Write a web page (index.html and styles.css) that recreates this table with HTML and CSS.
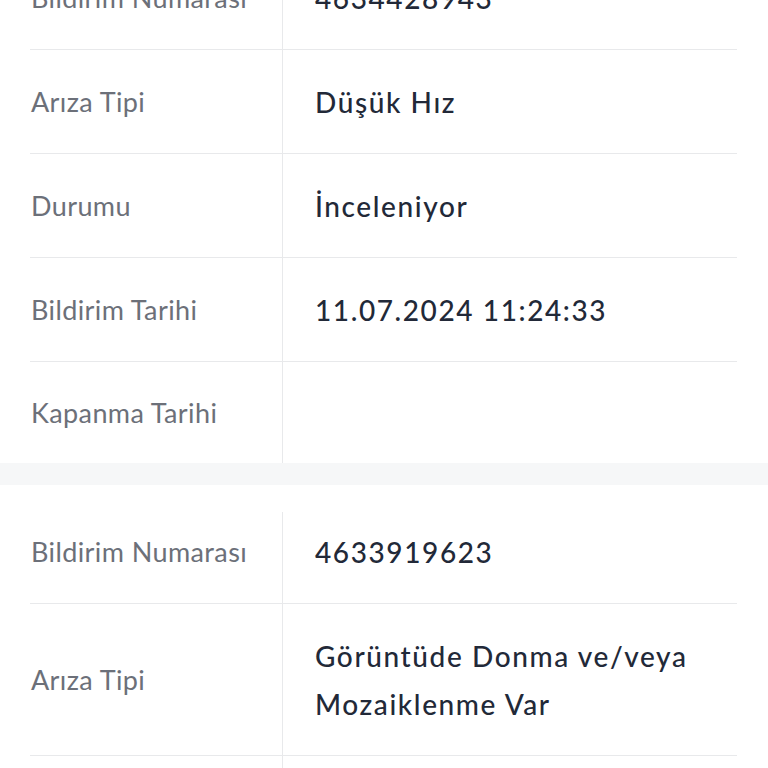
FILE: index.html
```html
<!DOCTYPE html>
<html lang="tr">
<head>
<meta charset="utf-8">
<link rel="stylesheet" href="styles.css">
</head>
<body>
<div class="section first">
  <div class="row"><div class="label">Bildirim Numarası</div><div class="value">4634428943</div></div>
  <div class="row"><div class="label">Arıza Tipi</div><div class="value">Düşük Hız</div></div>
  <div class="row"><div class="label">Durumu</div><div class="value">İnceleniyor</div></div>
  <div class="row"><div class="label">Bildirim Tarihi</div><div class="value">11.07.2024 11:24:33</div></div>
  <div class="row last"><div class="label">Kapanma Tarihi</div><div class="value"></div></div>
</div>
<div class="band"></div>
<div class="section second">
  <div class="row inset"><div class="label">Bildirim Numarası</div><div class="value">4633919623</div></div>
  <div class="row"><div class="label">Arıza Tipi</div><div class="value">Görüntüde Donma ve/veya Mozaiklenme Var</div></div>
  <div class="row"><div class="label">Durumu</div><div class="value">Kapandı</div></div>
</div>
</body>
</html>
```
FILE: styles.css
```css
html, body {
  margin: 0;
  padding: 0;
  background: #ffffff;
  overflow: hidden;
}
body {
  font-family: "Lato", "Open Sans", sans-serif;
}
.section {
  padding: 0 31px 0 30px;
}
.section.first {
  margin-top: -54px;
}
.section.second {
  padding-top: 15px;
}
.row {
  display: flex;
  border-bottom: 1px solid #e8e9eb;
}
.row.last {
  border-bottom: none;
}
.label {
  width: 253px;
  flex: none;
  box-sizing: border-box;
  padding-left: 1px;
  border-right: 1px solid #e8e9eb;
  display: flex;
  align-items: center;
  color: #6c7079;
  font-size: 27px;
  letter-spacing: 0.4px;
  font-weight: 400;
}
.row.inset .label {
  margin-top: 12px;
  padding-bottom: 12px;
}
.value {
  flex: 1;
  min-height: 48px;
  padding: 28px 0 27px 32px;
  line-height: 48px;
  font-size: 28px;
  letter-spacing: 1.6px;
  color: #222938;
  font-weight: 500;
}
.row.last .value {
  padding-bottom: 25px;
}
.band {
  height: 22px;
  background: #f6f7f8;
}
```
